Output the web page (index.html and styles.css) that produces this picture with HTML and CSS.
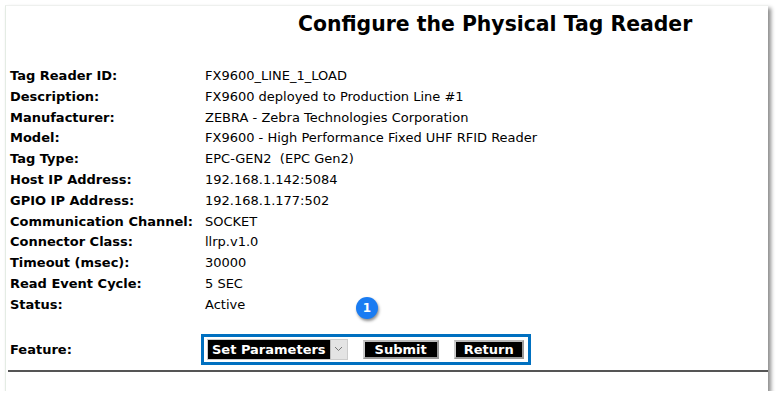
FILE: index.html
```html
<!DOCTYPE html>
<html>
<head>
    <title>Configure the Physical Tag Reader</title>
    <link rel="stylesheet" href="styles.css">
</head>
<body>
    <div class="panel">
        <h1>Configure the Physical Tag Reader</h1>

        <div class="details">
            <span class="label">Tag Reader ID:</span><span>FX9600_LINE_1_LOAD</span>
            <span class="label">Description:</span><span>FX9600 deployed to Production Line #1</span>
            <span class="label">Manufacturer:</span><span>ZEBRA - Zebra Technologies Corporation</span>
            <span class="label">Model:</span><span>FX9600 - High Performance Fixed UHF RFID Reader</span>
            <span class="label">Tag Type:</span><span>EPC-GEN2&nbsp; (EPC Gen2)</span>
            <span class="label">Host IP Address:</span><span>192.168.1.142:5084</span>
            <span class="label">GPIO IP Address:</span><span>192.168.1.177:502</span>
            <span class="label">Communication Channel:</span><span>SOCKET</span>
            <span class="label">Connector Class:</span><span>llrp.v1.0</span>
            <span class="label">Timeout (msec):</span><span>30000</span>
            <span class="label">Read Event Cycle:</span><span>5 SEC</span>
            <span class="label">Status:</span><span>Active</span>
        </div>

        <div class="feature-row">
            <span class="label">Feature:</span>
            <div class="actions">
                <span class="badge">1</span>
                <div class="select">
                    <span class="select-text">Set Parameters</span>
                    <span class="select-arrow">
                        <svg width="9" height="6" viewBox="0 0 9 6"><path d="M1 1 L4.5 4.5 L8 1" fill="none" stroke="#777" stroke-width="1"/></svg>
                    </span>
                </div>
                <span class="btn submit">Submit</span>
                <span class="btn return">Return</span>
            </div>
        </div>

        <div class="rule"></div>
    </div>
</body>
</html>
```

FILE: styles.css
```css
body {
    margin: 0;
    background-color: #fff;
    font-family: Verdana, "DejaVu Sans", sans-serif;
    font-size: 13px;
    color: #000;
}

.panel {
    margin: 5px 0 0 5px;
    width: 763px;
    height: 386px;
    background-color: #fff;
    border-left: 1px solid #e4ece4;
    border-top: 1px solid #eef0ee;
    box-shadow: 3px 3px 4px rgba(0, 0, 0, 0.45);
    box-sizing: border-box;
}

h1 {
    margin: 0;
    padding: 3px 0 0 292px;
    font-size: 20.4px;
    font-weight: bold;
    line-height: 30px;
}

.details {
    display: grid;
    grid-template-columns: 195px auto;
    margin-top: 27px;
    padding-left: 4px;
    line-height: 20.8px;
}

.label {
    font-weight: bold;
}

.feature-row {
    display: flex;
    align-items: center;
    padding-left: 4px;
    margin-top: 18px;
}

.feature-row .label {
    width: 191px;
}

.actions {
    position: relative;
    display: flex;
    align-items: center;
    border: 3px solid #0070c0;
    height: 25px;
    padding: 0 4px 0 3px;
}

.select {
    display: flex;
    height: 19px;
    border: 1px solid #ccc;
}

.select-text {
    background-color: #000;
    color: #fff;
    font-weight: bold;
    line-height: 19px;
    padding: 0 4px 0 4px;
}

.select-arrow {
    width: 16px;
    background-color: #e4e4e4;
    border-left: 1px solid #bbb;
    display: flex;
    align-items: center;
    justify-content: center;
}

.btn {
    background-color: #000;
    color: #fff;
    font-weight: bold;
    line-height: 15px;
    padding: 0 10px;
    border: 2px solid #999;
    border-top-color: #bbb;
    border-left-color: #ccc;
    margin-left: 15px;
}

.return {
    padding: 0 8px;
    margin-left: 15px;
}

.badge {
    position: absolute;
    left: 152px;
    top: -40px;
    width: 22px;
    height: 22px;
    border-radius: 50%;
    background-color: #1a7cf2;
    color: #fff;
    font-size: 12px;
    font-weight: bold;
    text-align: center;
    line-height: 22px;
    box-shadow: 1px 2px 3px rgba(0, 0, 0, 0.45);
}

.rule {
    margin: 5px 0 0 2px;
    height: 2px;
    background-color: #555;
}
```
